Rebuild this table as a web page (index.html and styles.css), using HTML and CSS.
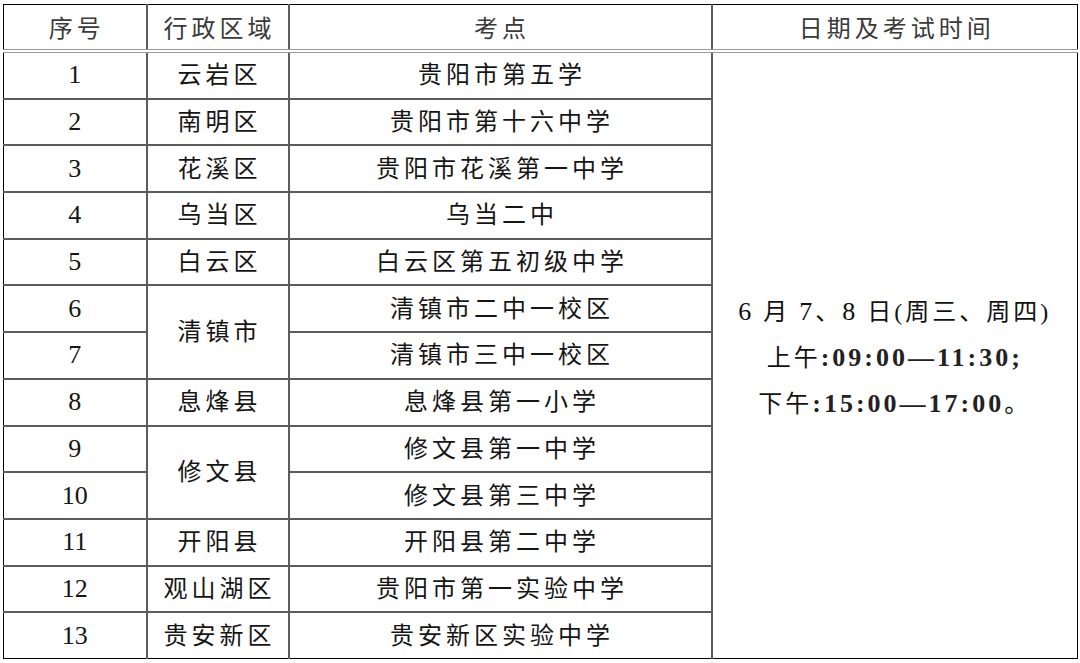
FILE: index.html
```html
<!DOCTYPE html>
<html lang="zh-CN">
<head>
<meta charset="utf-8">
<title>考点安排</title>
<link rel="stylesheet" href="styles.css">
</head>
<body>
<table class="exam">
  <colgroup>
    <col class="c-no">
    <col class="c-area">
    <col class="c-site">
    <col class="c-time">
  </colgroup>
  <thead>
    <tr class="head">
      <th>序号</th>
      <th>行政区域</th>
      <th>考点</th>
      <th>日期及考试时间</th>
    </tr>
  </thead>
  <tbody>
    <tr>
      <td class="num">1</td>
      <td>云岩区</td>
      <td>贵阳市第五学</td>
      <td class="time" rowspan="13">
        <div class="line"><span class="d">6</span> 月 <span class="d">7</span>、<span class="d">8</span> 日(周三、周四)</div>
        <div class="line">上午<span class="t">:09:00—11:30;</span></div>
        <div class="line">下午<span class="t">:15:00—17:00</span>。</div>
      </td>
    </tr>
    <tr><td class="num">2</td><td>南明区</td><td>贵阳市第十六中学</td></tr>
    <tr><td class="num">3</td><td>花溪区</td><td>贵阳市花溪第一中学</td></tr>
    <tr><td class="num">4</td><td>乌当区</td><td>乌当二中</td></tr>
    <tr><td class="num">5</td><td>白云区</td><td>白云区第五初级中学</td></tr>
    <tr><td class="num">6</td><td rowspan="2">清镇市</td><td>清镇市二中一校区</td></tr>
    <tr><td class="num">7</td><td>清镇市三中一校区</td></tr>
    <tr><td class="num">8</td><td>息烽县</td><td>息烽县第一小学</td></tr>
    <tr><td class="num">9</td><td rowspan="2">修文县</td><td>修文县第一中学</td></tr>
    <tr><td class="num">10</td><td>修文县第三中学</td></tr>
    <tr><td class="num">11</td><td>开阳县</td><td>开阳县第二中学</td></tr>
    <tr><td class="num">12</td><td>观山湖区</td><td>贵阳市第一实验中学</td></tr>
    <tr><td class="num">13</td><td>贵安新区</td><td>贵安新区实验中学</td></tr>
  </tbody>
</table>
</body>
</html>
```
FILE: styles.css
```css
html, body {
  margin: 0;
  padding: 0;
  background: #ffffff;
}

body {
  padding: 4px 0 0 3px;
  font-family: "Liberation Serif", "Noto Sans CJK SC", serif;
  color: #151515;
}

.exam {
  border-collapse: collapse;
  table-layout: fixed;
  width: 1074px;
  border: 1px solid #000;
}

.c-no { width: 143px; }
.c-area { width: 142px; }
.c-site { width: 423px; }
.c-time { width: 366px; }

.exam th,
.exam td {
  border: 2px solid #5c5c5c;
  padding: 0;
  text-align: center;
  vertical-align: middle;
  font-size: 24px;
  font-weight: 400;
  letter-spacing: 4px;
  text-indent: 4px;
  line-height: 28px;
  white-space: nowrap;
}

.exam th {
  height: 41px;
  padding-top: 3px;
  color: #3a3a3a;
  border-top: 1px solid #000;
  border-bottom: 4px double #9a9a9a;
}

.exam tr:first-child th:first-child,
.exam td:first-child {
  border-left: 1px solid #000;
}

.exam th:last-child,
.exam td.time {
  border-right: 1px solid #000;
}

.exam tbody tr:last-child td,
.exam td.time {
  border-bottom: 1px solid #000;
}

.exam td {
  height: 44.7px;
}

.exam td.num {
  letter-spacing: 0;
  text-indent: 0;
  font-size: 26px;
}

.exam td.time {
  letter-spacing: 3px;
  text-indent: 0;
  color: #111;
}

.time .line {
  line-height: 45px;
}

.time .line:first-child {
  margin-top: 5px;
}

.time .d {
  font-size: 26px;
}

.time .t {
  font-size: 26px;
  font-weight: 700;
  letter-spacing: 3px;
  color: #222;
}
```
